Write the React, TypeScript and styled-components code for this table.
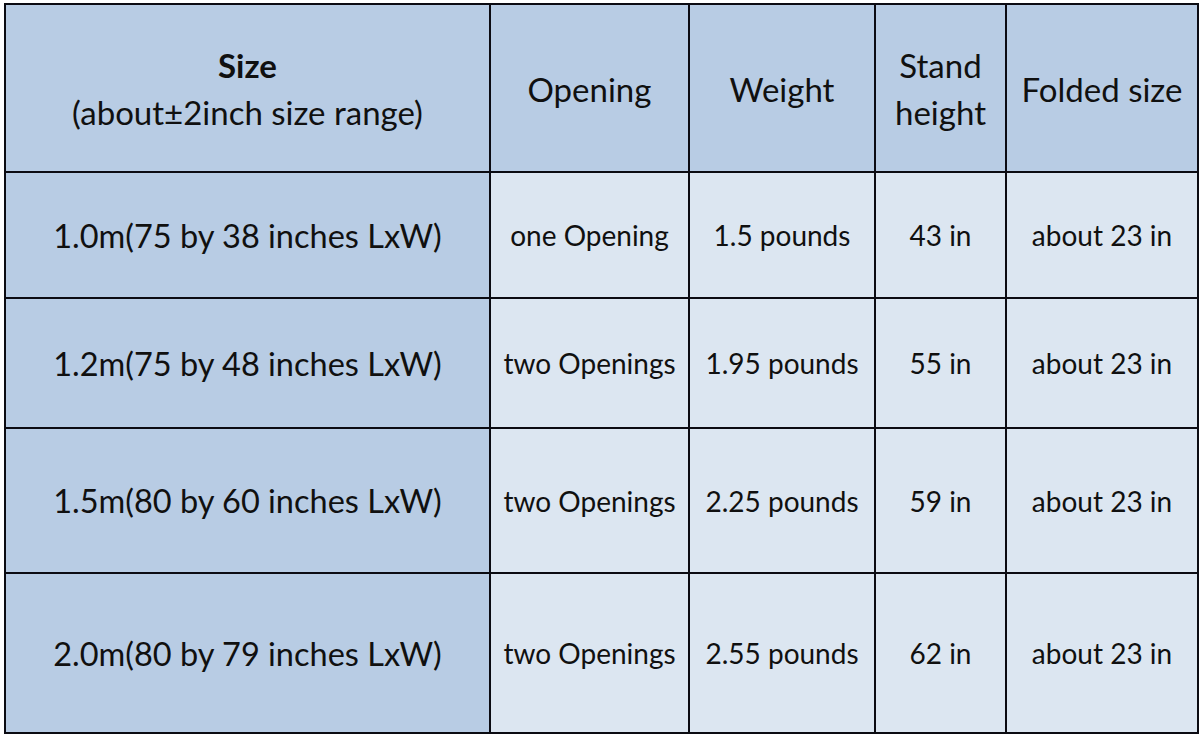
import React from "react";
import styled, { createGlobalStyle } from "styled-components";

const GlobalStyle = createGlobalStyle`
  html, body {
    margin: 0;
    padding: 0;
    background: #ffffff;
  }
  body {
    font-family: Lato, "Open Sans", sans-serif;
    color: #101010;
  }
`;

const rows = [
  { size: "1.0m(75 by 38 inches LxW)", opening: "one Opening", weight: "1.5 pounds", height: "43 in", folded: "about 23 in" },
  { size: "1.2m(75 by 48 inches LxW)", opening: "two Openings", weight: "1.95 pounds", height: "55 in", folded: "about 23 in" },
  { size: "1.5m(80 by 60 inches LxW)", opening: "two Openings", weight: "2.25 pounds", height: "59 in", folded: "about 23 in" },
  { size: "2.0m(80 by 79 inches LxW)", opening: "two Openings", weight: "2.55 pounds", height: "62 in", folded: "about 23 in" },
];

const Page = styled.div`
  padding: 3px 0 0 4px;
`;

const Grid = styled.div`
  display: grid;
  grid-template-columns: 485px 199px 186px 131px 192px;
  grid-template-rows: 168px 126px 130px 145px 160px;
  width: max-content;
  border-top: 2px solid #0b0b12;
  border-left: 2px solid #0b0b12;
`;

const Cell = styled.div<{ $tone: "dark" | "light"; $size?: number }>`
  box-sizing: border-box;
  display: flex;
  flex-direction: column;
  align-items: center;
  justify-content: center;
  text-align: center;
  border-right: 2px solid #0b0b12;
  border-bottom: 2px solid #0b0b12;
  background: ${(p) => (p.$tone === "dark" ? "#b8cce4" : "#dce6f1")};
  font-size: ${(p) => p.$size ?? 28}px;
  line-height: 1.42;
  white-space: nowrap;
  padding-top: 2px;
`;

const Strong = styled.span`
  font-weight: 700;
`;

export default function App() {
  return (
    <>
      <GlobalStyle />
      <Page>
        <Grid>
          <Cell $tone="dark" $size={33}>
            <Strong>Size</Strong>
            <span>(about±2inch size range)</span>
          </Cell>
          <Cell $tone="dark" $size={33}>Opening</Cell>
          <Cell $tone="dark" $size={33}>Weight</Cell>
          <Cell $tone="dark" $size={33}>
            <span>Stand</span>
            <span>height</span>
          </Cell>
          <Cell $tone="dark" $size={33}>Folded size</Cell>
          {rows.map((r) => (
            <React.Fragment key={r.size}>
              <Cell $tone="dark" $size={32.5}>{r.size}</Cell>
              <Cell $tone="light">{r.opening}</Cell>
              <Cell $tone="light">{r.weight}</Cell>
              <Cell $tone="light">{r.height}</Cell>
              <Cell $tone="light">{r.folded}</Cell>
            </React.Fragment>
          ))}
        </Grid>
      </Page>
    </>
  );
}
